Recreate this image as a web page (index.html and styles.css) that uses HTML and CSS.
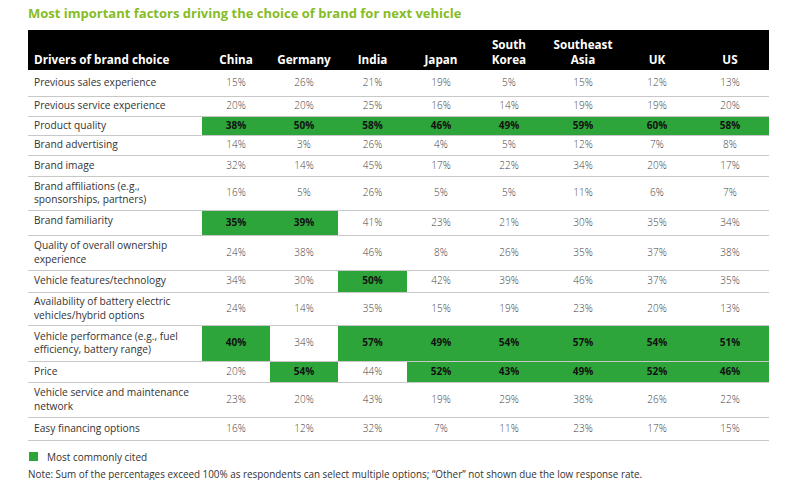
FILE: index.html
```html
<!DOCTYPE html>
<html>
<head>
<meta charset="utf-8">
<link rel="stylesheet" href="styles.css">
</head>
<body>
<div class="page">
  <h1 class="title">Most important factors driving the choice of brand for next vehicle</h1>
  <table class="grid">
    <colgroup>
      <col class="c-label"><col class="c68"><col class="c68"><col class="c69"><col class="c68"><col class="c68"><col class="c80"><col class="c68"><col class="c78">
    </colgroup>
    <thead>
      <tr class="h-head">
        <th class="lab">Drivers of brand choice</th>
        <th>China</th><th>Germany</th><th>India</th><th>Japan</th><th>South<br>Korea</th><th>Southeast<br>Asia</th><th>UK</th><th>US</th>
      </tr>
    </thead>
    <tbody>
      <tr class="h26"><td class="lab">Previous sales experience</td><td>15%</td><td>26%</td><td>21%</td><td>19%</td><td>5%</td><td>15%</td><td>12%</td><td>13%</td></tr>
      <tr class="h20"><td class="lab">Previous service experience</td><td>20%</td><td>20%</td><td>25%</td><td>16%</td><td>14%</td><td>19%</td><td>19%</td><td>20%</td></tr>
      <tr class="h19"><td class="lab">Product quality</td><td class="hi">38%</td><td class="hi">50%</td><td class="hi">58%</td><td class="hi">46%</td><td class="hi">49%</td><td class="hi">59%</td><td class="hi">60%</td><td class="hi">58%</td></tr>
      <tr class="h20"><td class="lab">Brand advertising</td><td>14%</td><td>3%</td><td>26%</td><td>4%</td><td>5%</td><td>12%</td><td>7%</td><td>8%</td></tr>
      <tr class="h21"><td class="lab">Brand image</td><td>32%</td><td>14%</td><td>45%</td><td>17%</td><td>22%</td><td>34%</td><td>20%</td><td>17%</td></tr>
      <tr class="h34"><td class="lab">Brand affiliations (e.g.,<br>sponsorships, partners)</td><td>16%</td><td>5%</td><td>26%</td><td>5%</td><td>5%</td><td>11%</td><td>6%</td><td>7%</td></tr>
      <tr class="h25"><td class="lab top">Brand familiarity</td><td class="hi">35%</td><td class="hi">39%</td><td>41%</td><td>23%</td><td>21%</td><td>30%</td><td>35%</td><td>34%</td></tr>
      <tr class="h35"><td class="lab">Quality of overall ownership<br>experience</td><td>24%</td><td>38%</td><td>46%</td><td>8%</td><td>26%</td><td>35%</td><td>37%</td><td>38%</td></tr>
      <tr class="h22"><td class="lab">Vehicle features/technology</td><td>34%</td><td>30%</td><td class="hi">50%</td><td>42%</td><td>39%</td><td>46%</td><td>37%</td><td>35%</td></tr>
      <tr class="h33"><td class="lab">Availability of battery electric<br>vehicles/hybrid options</td><td>24%</td><td>14%</td><td>35%</td><td>15%</td><td>19%</td><td>23%</td><td>20%</td><td>13%</td></tr>
      <tr class="h36"><td class="lab">Vehicle performance (e.g., fuel<br>efficiency, battery range)</td><td class="hi">40%</td><td>34%</td><td class="hi">57%</td><td class="hi">49%</td><td class="hi">54%</td><td class="hi">57%</td><td class="hi">54%</td><td class="hi">51%</td></tr>
      <tr class="h21"><td class="lab">Price</td><td>20%</td><td class="hi">54%</td><td>44%</td><td class="hi">52%</td><td class="hi">43%</td><td class="hi">49%</td><td class="hi">52%</td><td class="hi">46%</td></tr>
      <tr class="h35"><td class="lab">Vehicle service and maintenance<br>network</td><td>23%</td><td>20%</td><td>43%</td><td>19%</td><td>29%</td><td>38%</td><td>26%</td><td>22%</td></tr>
      <tr class="h23"><td class="lab">Easy financing options</td><td>16%</td><td>12%</td><td>32%</td><td>7%</td><td>11%</td><td>23%</td><td>17%</td><td>15%</td></tr>
    </tbody>
  </table>
  <div class="legend"><span class="swatch"></span><span>Most commonly cited</span></div>
  <p class="note">Note: Sum of the percentages exceed 100% as respondents can select multiple options; “Other” not shown due the low response rate.</p>
</div>
</body>
</html>
```
FILE: styles.css
```css
* { box-sizing: border-box; }
html, body { margin: 0; padding: 0; background: #fff; }
body { font-family: "Open Sans", "Liberation Sans", sans-serif; color: #333; }
.page { padding: 5px 0 0 28px; width: 800px; height: 480px; }
.title { margin: 0; font-size: 13px; line-height: 16px; font-weight: 700; color: #86bc25; height: 25px; }
.grid { border-collapse: collapse; table-layout: fixed; width: 741px; }
.c-label { width: 174px; }
.c68 { width: 68px; }
.c69 { width: 69px; }
.c80 { width: 80px; }
.c78 { width: 78px; }
.h-head th { background: #000; color: #fff; font-size: 11.7px; font-weight: 700; line-height: 15px; height: 40px; vertical-align: bottom; padding: 0 0 3px 0; text-align: center; }
.h-head th.lab { text-align: left; padding-left: 6px; }
td { font-size: 10px; line-height: 13.5px; color: #444; font-weight: 300; text-align: center; vertical-align: middle; padding: 0; border-bottom: 1px solid #c8c8c8; }
td.lab { text-align: left; padding-left: 6px; color: #333; font-weight: 400; font-size: 10.2px; }
td.top { vertical-align: top; padding-top: 3px; }
td.hi { background: #2ea53b; color: #111; font-weight: 700; }
.h26 td { height: 26px; }
.h20 td { height: 20px; }
.h19 td { height: 19px; }
.h21 td { height: 21px; }
.h22 td { height: 22px; }
.h23 td { height: 23px; }
.h25 td { height: 25px; }
.h33 td { height: 33px; }
.h34 td { height: 34px; }
.h35 td { height: 35px; }
.h36 td { height: 36px; }
.legend { display: flex; align-items: center; gap: 9px; margin-top: 9px; font-size: 10px; line-height: 14px; color: #333; padding-left: 1px; }
.swatch { width: 9px; height: 9px; background: #2ea53b; display: inline-block; }
.note { margin: 3px 0 0 0; font-size: 9.9px; line-height: 14px; color: #333; }
```
